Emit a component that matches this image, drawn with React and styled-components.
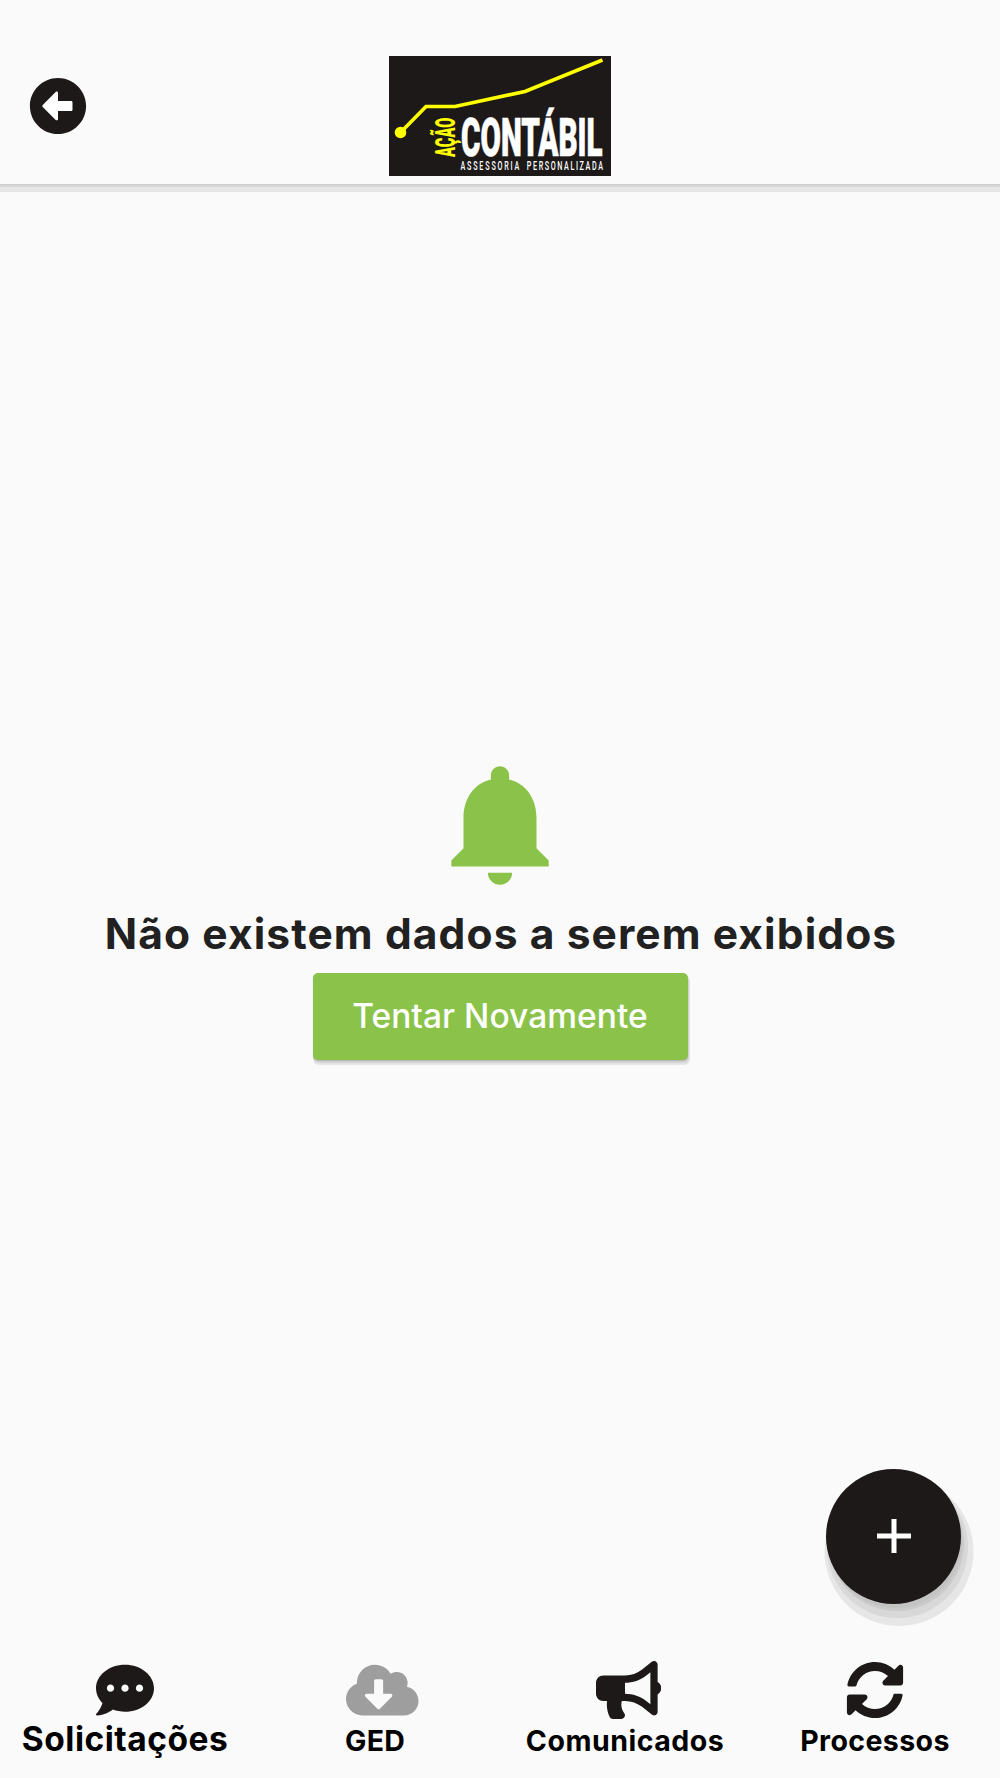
import styled, { createGlobalStyle } from "styled-components";
import {
  FaArrowAltCircleLeft,
  FaBullhorn,
  FaCloudDownloadAlt,
  FaCommentDots,
  FaSyncAlt,
} from "react-icons/fa";
import { MdNotifications } from "react-icons/md";

const GlobalStyle = createGlobalStyle`
  body {
    margin: 0;
    background: #fafafa;
  }
`;

const Screen = styled.div`
  width: 1000px;
  height: 1778px;
  display: flex;
  flex-direction: column;
  position: relative;
  overflow: hidden;
  background: #fafafa;
  font-family: Inter, "Liberation Sans", sans-serif;
`;

const Header = styled.header`
  height: 184px;
  flex: none;
  box-sizing: border-box;
  padding: 56px 29px 0;
  display: grid;
  grid-template-columns: 58px 1fr 58px;
  justify-items: center;
  align-items: start;
  box-shadow: 0 1px 0 #cdcdcd, 0 3px 0 #d6d6d6, 0 8px 0 #e6e6e6;
`;

const BackButton = styled.button`
  margin: 21.4px 0 0;
  padding: 0;
  border: 0;
  background: radial-gradient(#fff 50%, transparent 51%);
  display: flex;
  color: #1e1919;
  font-size: 58px;
`;

const Content = styled.main`
  flex: 1;
  display: flex;
  flex-direction: column;
  align-items: center;
  padding-top: 566.5px;
`;

const BellIcon = styled(MdNotifications)`
  flex: none;
  width: 146px;
  height: 146px;
  color: #8bc34a;
`;

const Message = styled.h1`
  margin: 11.5px 0 0;
  padding-left: 2px;
  color: #212121;
  font-size: 42.5px;
  font-weight: 650;
  line-height: 52px;
  letter-spacing: 1.1px;
  white-space: nowrap;
`;

const RetryButton = styled.button`
  margin-top: 13px;
  width: 375px;
  height: 87px;
  padding: 0 0 2px;
  border: 0;
  border-radius: 5px;
  background: #8bc34a;
  color: #fff;
  font-family: inherit;
  font-size: 33.5px;
  font-weight: 500;
  letter-spacing: 0.05px;
  box-shadow: 0 1px 1px #b4b4b4, 1px 3px 1px #d4d4d4, 1px 4px 0 1px #e6e6e6;
`;

const Fab = styled.button`
  position: absolute;
  left: 826px;
  top: 1468.5px;
  width: 135px;
  height: 135px;
  padding: 0;
  border: 0;
  border-radius: 50%;
  background: #1e1919;
  display: flex;
  align-items: center;
  justify-content: center;
  box-shadow: 2px 5px 0 -1px #c3c3c3, 3px 7px 0 0 #cacaca,
    4px 11px 0 3px #d8d8d8, 5.5px 15px 0 7px #e6e6e6;
`;

const NavBar = styled.nav`
  height: 117px;
  flex: none;
  display: grid;
  grid-template-columns: repeat(4, 1fr);
`;

const NavItem = styled.a`
  display: flex;
  flex-direction: column;
  align-items: center;
  color: #000;
`;

// wide glyphs overflow the square box to the right
const NavIcon = styled.span`
  width: 58px;
  height: 58px;
  display: flex;
  color: ${(props) => (props.$muted ? "#9e9e9e" : "#1e1919")};

  svg {
    flex: none;
    width: ${(props) => props.$width}px;
    height: 58px;
  }
`;

const NavLabel = styled.span`
  margin-top: ${(props) => (props.$active ? 0 : 2)}px;
  height: 40px;
  line-height: 40px;
  font-weight: 650;
  font-size: ${(props) => (props.$active ? 33.5 : 28.5)}px;
  letter-spacing: ${(props) => props.$spacing}px;
  white-space: nowrap;
`;

const items = [
  { label: "Solicitações", icon: FaCommentDots, width: 58, active: true, spacing: 0.5 },
  { label: "GED", icon: FaCloudDownloadAlt, width: 72.5, muted: true, spacing: 0.2 },
  { label: "Comunicados", icon: FaBullhorn, width: 65.25, spacing: 0.5 },
  { label: "Processos", icon: FaSyncAlt, width: 58, spacing: 0.4 },
];

const Logo = () => (
  <svg width="222" height="120" viewBox="0 0 222 120">
    <rect width="222" height="120" fill="#1e1919" />
    <polyline
      points="11,77 37,50.5 66,50.5 136,35.5 213.5,4"
      fill="none"
      stroke="#ffff00"
      strokeWidth="3.6"
    />
    <circle cx="11.5" cy="76.5" r="5.8" fill="#ffff00" />
    <g fontFamily="Roboto" fontWeight="900">
      <text
        transform="translate(65.5 101) rotate(-90) scale(0.5 1)"
        fontSize="28"
        textLength="79"
        lengthAdjust="spacingAndGlyphs"
        fill="#ffff00"
      >
        AÇÃO
      </text>
      <text
        transform="translate(72 99.8) scale(0.5 1)"
        fontSize="53.5"
        textLength="283"
        lengthAdjust="spacingAndGlyphs"
        fill="#fff"
        stroke="#fff"
        strokeWidth="0.7"
      >
        CONTÁBIL
      </text>
    </g>
    <g fontFamily="Roboto" fontSize="12" fontWeight="500" fill="#fff">
      <text transform="translate(71.5 114) scale(0.6 1)" textLength="98">
        ASSESSORIA
      </text>
      <text transform="translate(137.8 114) scale(0.6 1)" textLength="127">
        PERSONALIZADA
      </text>
    </g>
  </svg>
);

const App = () => {
  return (
    <>
      <GlobalStyle />
      <Screen>
        <Header>
          <BackButton>
            <FaArrowAltCircleLeft />
          </BackButton>
          <Logo />
        </Header>
        <Content>
          <BellIcon />
          <Message>Não existem dados a serem exibidos</Message>
          <RetryButton>Tentar Novamente</RetryButton>
        </Content>
        <NavBar>
          {items.map(({ label, icon: Icon, width, active, muted, spacing }) => (
            <NavItem key={label}>
              <NavIcon $muted={muted} $width={width}>
                <Icon />
              </NavIcon>
              <NavLabel $active={active} $spacing={spacing}>
                {label}
              </NavLabel>
            </NavItem>
          ))}
        </NavBar>
        <Fab>
          <svg width="34" height="34" viewBox="0 0 34 34">
            <path d="M14.5 0h5v14.5H34v5H19.5V34h-5V19.5H0v-5h14.5z" fill="#fff" />
          </svg>
        </Fab>
      </Screen>
    </>
  );
};

export default App;
